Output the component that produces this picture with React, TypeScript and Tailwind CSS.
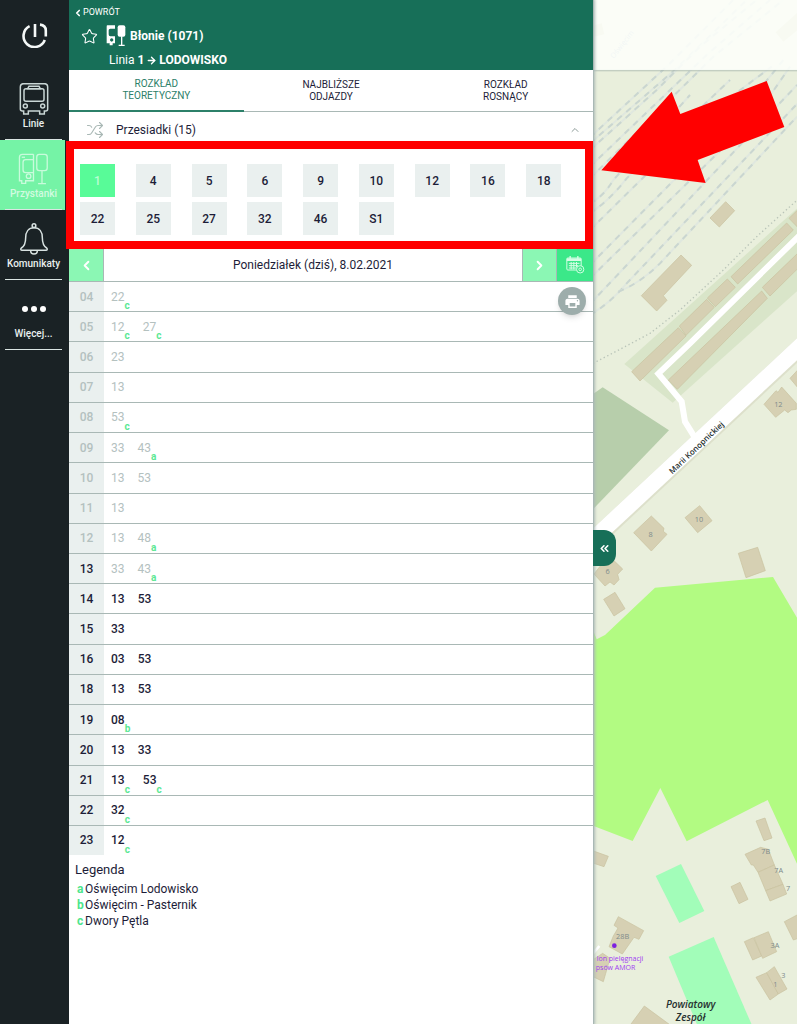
import React from "react";
import { ArrowRight, ChevronLeft, ChevronRight, ChevronUp, ChevronsLeft, Shuffle, Star } from "lucide-react";
import { MdPrint } from "react-icons/md";

type Departure = { minute: string; note?: string; past?: boolean };
type HourRow = { hour: string; past?: boolean; departures: Departure[] };

const lines = ["1", "4", "5", "6", "9", "10", "12", "16", "18", "22", "25", "27", "32", "46", "S1"];

const timetable: HourRow[] = [
  { hour: "04", past: true, departures: [{ minute: "22", note: "c", past: true }] },
  { hour: "05", past: true, departures: [{ minute: "12", note: "c", past: true }, { minute: "27", note: "c", past: true }] },
  { hour: "06", past: true, departures: [{ minute: "23", past: true }] },
  { hour: "07", past: true, departures: [{ minute: "13", past: true }] },
  { hour: "08", past: true, departures: [{ minute: "53", note: "c", past: true }] },
  { hour: "09", past: true, departures: [{ minute: "33", past: true }, { minute: "43", note: "a", past: true }] },
  { hour: "10", past: true, departures: [{ minute: "13", past: true }, { minute: "53", past: true }] },
  { hour: "11", past: true, departures: [{ minute: "13", past: true }] },
  { hour: "12", past: true, departures: [{ minute: "13", past: true }, { minute: "48", note: "a", past: true }] },
  { hour: "13", departures: [{ minute: "33", past: true }, { minute: "43", note: "a", past: true }] },
  { hour: "14", departures: [{ minute: "13" }, { minute: "53" }] },
  { hour: "15", departures: [{ minute: "33" }] },
  { hour: "16", departures: [{ minute: "03" }, { minute: "53" }] },
  { hour: "18", departures: [{ minute: "13" }, { minute: "53" }] },
  { hour: "19", departures: [{ minute: "08", note: "b" }] },
  { hour: "20", departures: [{ minute: "13" }, { minute: "33" }] },
  { hour: "21", departures: [{ minute: "13", note: "c" }, { minute: "53", note: "c" }] },
  { hour: "22", departures: [{ minute: "32", note: "c" }] },
  { hour: "23", departures: [{ minute: "12", note: "c" }] },
];

const legend = [
  { key: "a", text: "Oświęcim Lodowisko" },
  { key: "b", text: "Oświęcim - Pasternik" },
  { key: "c", text: "Dwory Pętla" },
];

function PowerIcon() {
  return (
    <svg viewBox="0 0 26 26" className="h-[26px] w-[26px]" fill="none" stroke="#f4f8f7" strokeWidth="2.6">
      <path d="M7.6 4.2 A11 11 0 1 0 22.8 18" />
      <path d="M13 2v13" />
      <path d="M18 2.6c4 .4 5.800 2.600 5.800 6v6" />
    </svg>
  );
}

function BusIcon() {
  return (
    <svg viewBox="0 0 90 96" className="h-8 w-[30px]" fill="none" stroke="#c9d6d5" strokeWidth="4.500">
      <path d="M14 2h62q10 0 10 10v66q0 6-6 6h-4v9H62v-9H28v9H14v-9h-4q-6 0-6-6V12Q4 2 14 2Z" />
      <path d="M30 10h30l4 7H26Z" />
      <rect x="15" y="17" width="60" height="38" rx="6" />
      <circle cx="19" cy="69" r="6" />
      <circle cx="71" cy="69" r="6" />
    </svg>
  );
}

function StopIcon() {
  return (
    <svg viewBox="0 0 92 98" className="h-8 w-[31px]" fill="none" stroke="#c9fbdc" strokeWidth="4">
      <path d="M46 4H12Q3 4 3 13v72h7v8h12v-8h24V4" />
      <path d="M46 20H22q-8 0-8 8v24q0 8 8 8h24" />
      <path d="M10 13h10" />
      <circle cx="31" cy="71" r="7" />
      <rect x="56" y="4" width="32" height="50" rx="8" />
      <path d="M72 54v40M60 94h24" />
    </svg>
  );
}

function StopSolidIcon() {
  return (
    <svg viewBox="0 0 60 66" className="h-[22px] w-5" fill="white">
      <path
        fillRule="evenodd"
        d="M4 1H27V55H20V61H11V55H2V5Q2 1 4 1ZM27 11H13Q8 11 8 16V28Q8 34 13 34H27ZM17 40a5 5 0 1 0 .1 0Z"
      />
      <rect x="35" y="1" width="23" height="34" rx="6" />
      <path d="M45 34h4v25h7v4H38v-4h7Z" />
    </svg>
  );
}

function BellIcon() {
  return (
    <svg viewBox="0 0 90 96" className="h-8 w-[30px]" fill="none" stroke="#d8e2e1" strokeWidth="4.500" strokeLinejoin="round">
      <circle cx="45" cy="8" r="5.500" />
      <path d="M45 14c-17 0-25 14-25 30 0 18-5 26-13 31-3 3-2 7 2 7h72c4 0 5-4 2-7-8-5-13-13-13-31 0-16-8-30-25-30Z" />
      <path d="M35 83c0 13 20 13 20 0" />
    </svg>
  );
}

function CalendarIcon() {
  return (
    <svg viewBox="0 0 56 54" className="h-[18px] w-[19px]" fill="none" stroke="#d5fde5" strokeWidth="3">
      <rect x="2" y="6" width="43" height="36" rx="3" />
      <path d="M2 11h43" strokeWidth="8" />
      <path d="M12 0v10M35 0v10" strokeWidth="4" />
      <path d="M8 22h32M8 29h28M8 36h22M15 18v22M23 18v22M31 18v16" />
      <circle cx="42" cy="40" r="11" fill="#3be889" />
      <circle cx="42" cy="40" r="4" />
    </svg>
  );
}

function SideItem({ label, active = false, children }: { label: string; active?: boolean; children: React.ReactNode }) {
  return (
    <a
      href="#"
      className={
        active
          ? "flex h-[70px] flex-col items-center bg-[#75f3a6] pl-[2px] text-[#d2fbe0]"
          : "flex h-[70px] flex-col items-center pl-[2px] text-[#e8efee]"
      }
    >
      <span className="mt-3 flex h-[34px] items-center justify-center">{children}</span>
      <span className="flex h-[14px] items-center text-[10px] font-medium">{label}</span>
      <span className="mt-auto h-px w-[57px] bg-[#dbe5e3]" />
    </a>
  );
}

const tracks = [
  "M0 412L235 195L435 -5",
  "M0 430L260 205L470 0",
  "M0 450L200 270L330 140L500 0",
  "M0 500L350 165L540 0",
  "M0 535L370 170L580 0",
  "M0 610Q40 590 70 540L300 285",
  "M0 640Q60 600 110 535L420 240",
  "M0 690L350 345L545 200",
  "M0 795L450 340L580 180",
  "M0 835L500 345L600 200",
  "M0 912L621 255",
  "M0 945Q60 910 110 850L621 312",
  "M85 875Q150 850 210 790L621 350",
];

const buildings = [
  "360,654 407,605 434,632 388,681",
  "154,887 273,765 305,796 220,887 231,901 200,933",
  "423,830 590,669 610,690 443,852",
  "597,655 625,628 625,684",
  "352,894 412,837 436,862 376,920",
  "268,978 350,898 373,922 288,1006",
  "125,1115 265,983 288,1008 150,1143",
  "517,862 625,758 625,804 540,888",
  "235,1140 515,873 532,895 262,1168",
  "131,1598 184,1548 222,1585 220,1594 231,1603 184,1653",
  "285,1553 329,1517 366,1562 323,1598",
  "522,1213 558,1172 564,1177 575,1161 619,1210 619,1228 604,1230 594,1238 584,1230 557,1252",
  "600,1135 625,1108 625,1165",
  "12,1722 45,1680 70,1680 98,1707 83,1723 87,1739 72,1755 60,1746 45,1758",
  "41,1798 75,1777 105,1826 72,1848",
  "445,1660 503,1642 526,1712 468,1733",
  "5,2551 55,2569 42,2600 5,2588",
  "498,2463 525,2454 546,2514 522,2522",
  "465,2563 512,2542 535,2548 553,2595 504,2617 490,2595 484,2595",
  "504,2617 553,2595 579,2653 527,2672",
  "527,2672 579,2653 590,2682 540,2703",
  "423,2660 450,2647 474,2698 447,2711",
  "85,2750 161,2792 147,2818 132,2812 97,2862 57,2840 70,2808 84,2784 72,2776",
  "5,2882 38,2860 60,2875 40,2945 5,2928",
  "120,3076 163,3018 242,3076",
  "583,2765 625,2743 625,2815 610,2820",
  "463,2825 490,2813 515,2868 488,2880",
  "492,2813 535,2795 560,2855 518,2875",
  "498,2932 530,2918 565,2982 540,3000",
  "530,2918 553,2900 591,2967 565,2982",
];

const houseNumbers = [
  { x: 565, y: 1222, text: "12" },
  { x: 182, y: 1610, text: "8" },
  { x: 327, y: 1567, text: "10" },
  { x: 53, y: 1722, text: "6" },
  { x: 527, y: 2562, text: "7B" },
  { x: 566, y: 2619, text: "7A" },
  { x: 594, y: 2673, text: "7" },
  { x: 98, y: 2816, text: "28B" },
  { x: 555, y: 2843, text: "3A" },
  { x: 580, y: 2934, text: "3" },
  { x: 556, y: 2960, text: "1" },
];

function CityMap() {
  return (
    <svg
      viewBox="9 0 612 3072"
      preserveAspectRatio="xMinYMin slice"
      className="absolute inset-0 h-full w-full font-['Open_Sans','Noto_Sans',sans-serif]"
      role="img"
      aria-label="Mapa"
    >
      <rect x="0" y="0" width="630" height="3072" fill="#e9efdc" />
      <g fill="none">
        {tracks.map((d) => (
          <g key={d}>
            <path d={d} stroke="#e0e8df" strokeWidth="6" />
            <path d={d} stroke="#cad6d0" strokeWidth="6" strokeDasharray="18 18" />
          </g>
        ))}
      </g>
      <polygon points="103,1092 625,622 625,870 248,1208" fill="#d9e5c9" />
      <path d="M9 1090L90 1048L180 1000L270 930L400 810L500 710L625 597" fill="none" stroke="#b9c4b8" strokeWidth="4" strokeDasharray="4 8" />
      <polygon points="5,1185 38,1162 237,1291 5,1532" fill="#b7ceab" />
      <path d="M20 1612L640 1034" stroke="#dde0cb" strokeWidth="54" />
      <path d="M20 1608L640 1030" stroke="#ffffff" strokeWidth="48" />
      <path d="M635 700L300 1030L205 1121L275 1205L285 1265L318 1318" fill="none" stroke="#ffffff" strokeWidth="18" />
      <polygon
        points="5,1880 20,1918 45,1905 195,1763 549,1731 625,1860 625,2600 533,2400 290,2524 211,2364 128,2523 5,2476"
        fill="#b2fb82"
      />
      <polygon points="197,2628 273,2592 343,2733 268,2769" fill="#a2fdb9" />
      <polygon points="236,2870 371,2811 486,3076 322,3076" fill="#a2fdb9" />
      <path d="M5 2865L28 2838" stroke="#ffffff" strokeWidth="8" />
      <g fill="#d6d0b3" stroke="#c9c19f" strokeWidth="2">
        {buildings.map((points) => (
          <polygon key={points} points={points} />
        ))}
      </g>
      <g fill="#7d8b8b" fontSize="22" textAnchor="middle">
        {houseNumbers.map((n) => (
          <text key={n.text} x={n.x} y={n.y}>
            {n.text}
          </text>
        ))}
      </g>
      <text transform="translate(325 1349) rotate(-43.500)" textAnchor="middle" fontSize="24" fontWeight="600" fill="#26302f">
        Marii Konopnickiej
      </text>
      <circle cx="73" cy="2837" r="7" fill="#7d1fe0" />
      <g fill="#a03cf2" fontSize="21">
        <text x="160" y="2884" textAnchor="end">lon pielęgnacji</text>
        <text x="136" y="2910" textAnchor="end">psów AMOR</text>
      </g>
      <g fill="#26302f" fontSize="30" fontStyle="italic" fontWeight="600" textAnchor="middle">
        <text x="302" y="3024">Powiatowy</text>
        <text x="302" y="3063">Zespół</text>
      </g>
      <text transform="translate(102 138) rotate(-52)" textAnchor="middle" fontSize="22" fill="#9aa8c8">
        Oświęcim
      </text>
      <polygon points="5,78 35,70 43,103 5,112" fill="#d6d0b3" />
      <polygon points="557,97 625,35 625,88 580,125" fill="#d6d0b3" />
      <rect x="0" y="208" width="630" height="6" fill="#9dada5" opacity="0.500" />
      <rect x="0" y="0" width="630" height="210" fill="#fdfffa" opacity="0.880" />
      <polygon points="34,511 245,275 271,342 530,243 583,381 323,480 347,549" fill="#ff0000" />
    </svg>
  );
}

export default function App() {
  return (
    <div className="flex min-h-screen bg-white font-['Roboto','Noto_Sans',sans-serif] text-[12px] text-[#1d1d38]">
      <nav className="w-[69px] shrink-0 bg-[#1a2225] pr-1">
        <a href="#" aria-label="Strona główna" className="flex h-[70px] items-center justify-center pl-1">
          <PowerIcon />
        </a>
        <SideItem label="Linie">
          <BusIcon />
        </SideItem>
        <SideItem label="Przystanki" active>
          <StopIcon />
        </SideItem>
        <SideItem label="Komunikaty">
          <BellIcon />
        </SideItem>
        <SideItem label="Więcej...">
          <span className="flex gap-[3px]">
            <span className="h-[6px] w-[6px] rounded-full bg-white" />
            <span className="h-[6px] w-[6px] rounded-full bg-white" />
            <span className="h-[6px] w-[6px] rounded-full bg-white" />
          </span>
        </SideItem>
      </nav>

      <main className="min-w-0 flex-[524]">
        <header className="h-[70px] bg-[#176f58] pt-[6px] text-white">
          <a href="#" className="flex h-[14px] items-center pl-1 text-[9px]">
            <ChevronLeft size={10} strokeWidth={4} />
            POWRÓT
          </a>
          <div className="flex h-8 items-center pl-3">
            <button type="button" aria-label="Dodaj do ulubionych" className="mr-2">
              <Star size={17} strokeWidth={1.5} />
            </button>
            <StopSolidIcon />
            <h1 className="ml-1 text-[12px] font-bold">Błonie (1071)</h1>
          </div>
          <p className="flex h-4 items-center pl-10 text-[12px]">
            Linia&nbsp;
            <b className="flex items-center">
              1
              <ArrowRight size={11} strokeWidth={3} className="mx-[2px]" />
              LODOWISKO
            </b>
          </p>
        </header>

        <div role="tablist" className="grid h-[42px] grid-cols-3 border-b border-[#a9b8b5] text-[10px] leading-3">
          <button type="button" role="tab" aria-selected="true" className="-mb-px border-b-2 border-[#2c8069] text-[#2c8069]">
            ROZKŁAD
            <br />
            TEORETYCZNY
          </button>
          <button type="button" role="tab" aria-selected="false">
            NAJBLIŻSZE
            <br />
            ODJAZDY
          </button>
          <button type="button" role="tab" aria-selected="false">
            ROZKŁAD
            <br />
            ROSNĄCY
          </button>
        </div>

        <button type="button" className="flex h-[29px] w-full items-center pt-[6px] pr-3 pl-[17px] text-left text-[12px]">
          <Shuffle size={18} strokeWidth={1.5} className="mr-3 text-[#a9b8b5]" />
          Przesiadki (15)
          <ChevronUp size={12} strokeWidth={2} className="ml-auto text-[#8d9c99]" />
        </button>

        <section aria-label="Przesiadki" className="relative grid grid-cols-9 gap-y-[5px] pt-[23px] pr-[11px] pb-[14px] pl-[11px]">
          {lines.map((line, i) => (
            <button
              key={line}
              type="button"
              className={
                i === 0
                  ? "h-[33px] w-[35px] bg-[#58fb98] text-[12px] font-medium text-[#b9fdd3]"
                  : "h-[33px] w-[35px] bg-[#eaf0ef] text-[12px] font-medium"
              }
            >
              {line}
            </button>
          ))}
          <span className="pointer-events-none absolute -left-[3px] right-0 top-0 bottom-0 border-8 border-[#ff0000]" />
        </section>

        <div className="flex h-8 items-stretch text-white">
          <button type="button" aria-label="Poprzedni dzień" className="flex w-[35px] items-center justify-center border-r border-[#a9b8b5] bg-[#8bf7b4]">
            <ChevronLeft size={15} strokeWidth={3} />
          </button>
          <p className="flex flex-1 items-center justify-center text-[12px] text-[#1d1d38]">Poniedziałek (dziś), 8.02.2021</p>
          <button type="button" aria-label="Następny dzień" className="flex w-[35px] items-center justify-center border-x border-[#a9b8b5] bg-[#8bf7b4]">
            <ChevronRight size={15} strokeWidth={3} />
          </button>
          <button type="button" aria-label="Wybierz datę" className="flex w-9 items-center justify-center bg-[#3be889]">
            <CalendarIcon />
          </button>
        </div>

        <div className="relative">
          <table className="h-[574px] w-full border-collapse text-[12px]">
            <tbody>
              {timetable.map((row) => (
                <tr key={row.hour} className="border-t border-[#a9b8b5]">
                  <th
                    scope="row"
                    className={
                      row.past
                        ? "w-[35px] bg-[#eaf0ef] p-0 text-center font-medium text-[#b4c1bf]"
                        : "w-[35px] bg-[#eaf0ef] p-0 text-center font-medium"
                    }
                  >
                    {row.hour}
                  </th>
                  <td className="py-0 pr-0 pl-[7px]">
                    <div className="flex h-4 gap-[13px] leading-4">
                      {row.departures.map((d) => (
                        <span key={d.minute} className={d.past ? "flex text-[#b4c1bf]" : "flex font-medium"}>
                          {d.minute}
                          {d.note && <sub className="-mb-1 self-end text-[10px] leading-none font-bold text-[#5be894]">{d.note}</sub>}
                        </span>
                      ))}
                    </div>
                  </td>
                </tr>
              ))}
            </tbody>
          </table>
          <button
            type="button"
            aria-label="Drukuj"
            className="absolute top-[6px] right-[7px] flex h-7 w-7 items-center justify-center rounded-full bg-[#9dadab] text-white shadow-md"
          >
            <MdPrint size={17} />
          </button>
        </div>

        <section className="pt-[6px] pl-[6px]">
          <h2 className="mb-[2px] text-[13px] leading-[18px]">Legenda</h2>
          <ul>
            {legend.map((item) => (
              <li key={item.key} className="flex h-4 items-center pl-[2px] text-[12px]">
                <b className="w-2 text-[#4de58c]">{item.key}</b>
                {item.text}
              </li>
            ))}
          </ul>
        </section>
      </main>

      <aside className="relative min-w-0 flex-[204] overflow-hidden">
        <CityMap />
        <span className="absolute inset-y-0 left-0 w-px bg-[#a9b8b5] shadow-[0_0_3px_1px_#a9b8b5]" />
        <button
          type="button"
          aria-label="Zwiń panel"
          className="absolute top-[530px] left-0 flex h-9 w-[23px] items-center justify-center rounded-r-[12px] bg-[#176f58] text-white"
        >
          <ChevronsLeft size={13} strokeWidth={3} />
        </button>
      </aside>
    </div>
  );
}
